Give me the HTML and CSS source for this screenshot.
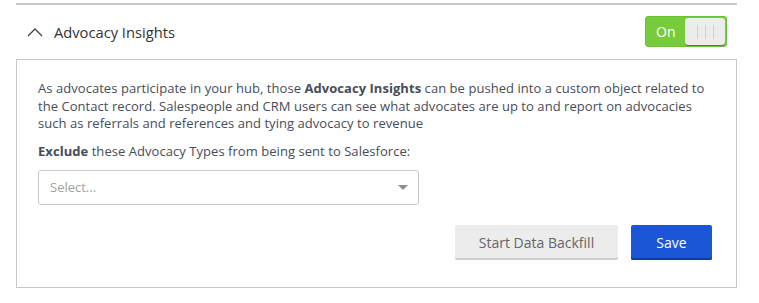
FILE: index.html
```html
<!DOCTYPE html>
<html lang="en">
<head>
    <meta charset="UTF-8">
    <meta name="viewport" content="width=device-width, initial-scale=1.0">
    <title>Advocacy Insights</title>
    <link rel="stylesheet" href="styles.css">
</head>
<body>
    <div class="section">
        <div class="section-header">
            <div class="section-title">
                <svg class="chevron" width="16" height="10" viewBox="0 0 16 10">
                    <path d="M1 9 L8 2 L15 9" fill="none" stroke="#444" stroke-width="1.3"/>
                </svg>
                <span>Advocacy Insights</span>
            </div>
            <div class="toggle">
                <span class="toggle-label">On</span>
                <span class="toggle-knob">
                    <i></i><i></i><i></i>
                </span>
            </div>
        </div>
        <div class="panel">
            <p class="intro">As advocates participate in your hub, those <b>Advocacy Insights</b> can be pushed into a custom object related to the Contact record. Salespeople and CRM users can see what advocates are up to and report on advocacies such as referrals and references and tying advocacy to revenue</p>
            <p class="label"><b>Exclude</b> these Advocacy Types from being sent to Salesforce:</p>
            <div class="select">
                <span class="placeholder">Select...</span>
                <span class="caret"></span>
            </div>
            <div class="actions">
                <button class="btn btn-light">Start Data Backfill</button>
                <button class="btn btn-primary">Save</button>
            </div>
        </div>
    </div>
</body>
</html>
```

FILE: styles.css
```css
body {
    margin: 0;
    background: #fff;
    font-family: "Open Sans", "Lato", sans-serif;
    color: #474c58;
}
.section {
    width: 721px;
    margin: 3px 0 0 16px;
    border-top: 2px solid #c8c8c8;
}
.section-header {
    height: 54px;
    display: flex;
    align-items: center;
    justify-content: space-between;
    padding: 0 10px 0 11px;
}
.section-title {
    display: flex;
    align-items: center;
    font-size: 14.7px;
    color: #333;
    margin-top: -1px;
}
.chevron {
    margin-right: 11px;
}
.toggle {
    display: flex;
    align-items: center;
    width: 79px;
    height: 29px;
    background: #76cc3b;
    border: 1px solid #6cc034;
    border-radius: 3px;
    padding: 0 1px 0 0;
    margin-top: -1px;
}
.toggle-label {
    flex: 1;
    color: #fff;
    font-size: 14px;
    padding-left: 10px;
}
.toggle-knob {
    width: 40px;
    height: 27px;
    background: #ececec;
    border-radius: 3px;
    box-shadow: 0 1px 0 #6a6a6a;
    display: flex;
    justify-content: center;
    align-items: center;
    gap: 7px;
}
.toggle-knob i {
    display: block;
    width: 1px;
    height: 14px;
    background: #cfcfcf;
}
.panel {
    border: 1px solid #c8c8c8;
    padding: 20px 24px 27px 21px;
}
.intro {
    margin: 0;
    font-size: 13px;
    letter-spacing: 0.05px;
    line-height: 17.5px;
}
.label {
    margin: 9px 0 10px;
    font-size: 13px;
    letter-spacing: 0.05px;
    line-height: 18px;
}
.select {
    height: 33px;
    border: 1px solid #c8c8c8;
    border-radius: 3px;
    display: flex;
    align-items: center;
    justify-content: space-between;
    padding: 0 10px 0 11px;
    width: 358px;
}
.placeholder {
    font-size: 13px;
    color: #a0a0a0;
}
.caret {
    width: 0;
    height: 0;
    border-left: 5px solid transparent;
    border-right: 5px solid transparent;
    border-top: 5px solid #8c8c8c;
}
.actions {
    display: flex;
    justify-content: flex-end;
    gap: 13px;
    margin-top: 20px;
}
.btn {
    height: 35px;
    border: none;
    border-radius: 2px;
    font-family: inherit;
    font-size: 14px;
    cursor: pointer;
}
.btn-light {
    width: 163px;
    background: #ececec;
    color: #666;
    box-shadow: inset 0 -2px 0 #cfcfcf;
}
.btn-primary {
    width: 81px;
    background: #1a56d6;
    color: #fff;
    box-shadow: inset 0 -2px 0 #0f3c9e;
}
```
